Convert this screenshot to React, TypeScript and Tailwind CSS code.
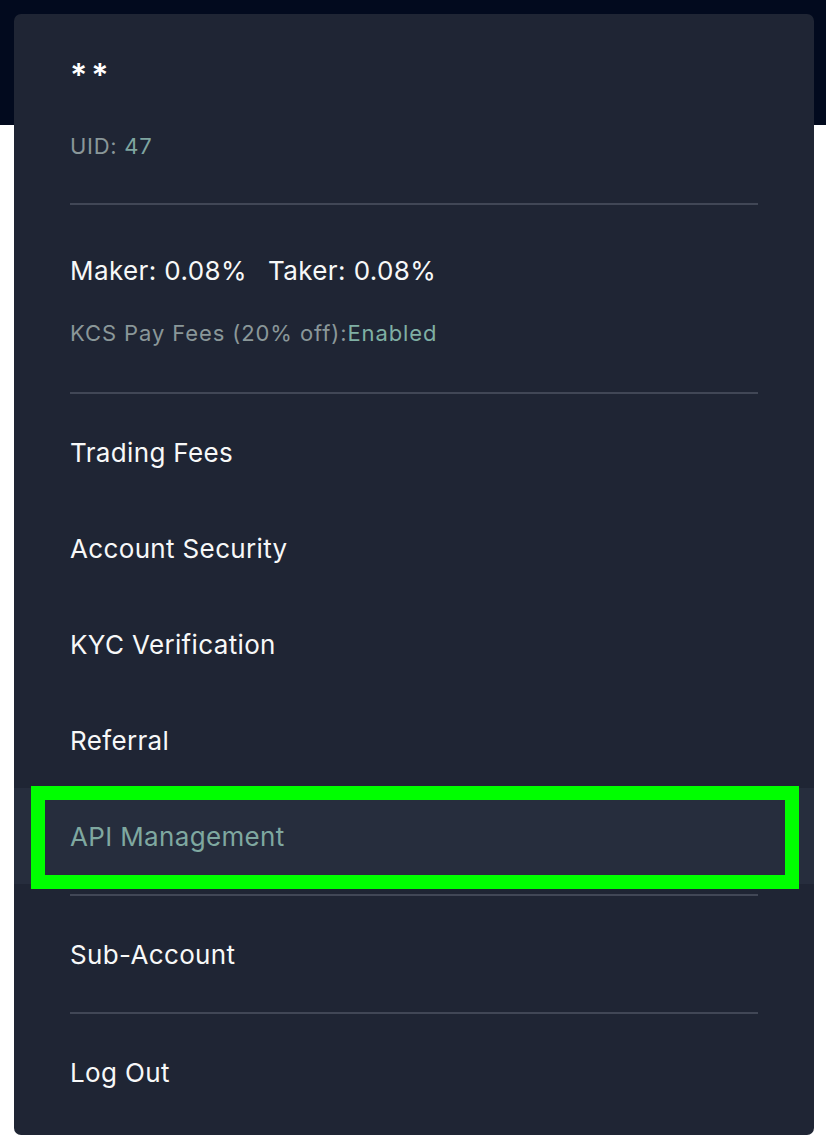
import React from "react";

const font = { fontFamily: "Inter, 'Noto Sans', sans-serif" };

function Divider() {
  return <div className="h-[2px] bg-[#414756]" />;
}

function Row({ label, active }: { label: string; active?: boolean }) {
  if (active) {
    return (
      <div className="relative -mx-[56px] h-[96px] bg-[#262D3D] px-[56px] flex items-center">
        <span className="text-[26px] text-[#7FA8A0] tracking-[0.35px]">{label}</span>
        <div className="absolute left-[17px] right-[15px] top-[-2px] bottom-[-5px] border-[14px] border-[#00FF00]" />
      </div>
    );
  }
  return (
    <div className="h-[96px] flex items-center">
      <span className="text-[26px] text-[#F7F8F8] tracking-[0.35px]">{label}</span>
    </div>
  );
}

export default function App() {
  return (
    <div className="w-[826px] h-[1148px] bg-white relative overflow-hidden" style={font}>
      <div className="absolute inset-x-0 top-0 h-[125px] bg-[#020A1E]" />
      <div className="relative pt-[14px] px-[14px]">
        <div className="w-[800px] rounded-[7px] bg-[#1F2534] px-[56px] pt-[30px] pb-[15px]">
          <div className="h-[56px] flex items-center pt-[8px] text-[32px] font-semibold text-white tracking-[4px]">**</div>
          <div className="mt-[26px] h-[40px] flex items-center text-[22px] text-[#8A9799] tracking-[0.7px]">
            UID: <span className="ml-[7px] text-[#7FA5A0]">47</span>
          </div>
          <div className="mt-[37px]">
            <Divider />
          </div>
          <div className="mt-[45px] h-[40px] flex items-center text-[26px] text-[#F7F8F8] tracking-[0.4px]">
            <span>Maker: 0.08%</span>
            <span className="ml-[21px]">Taker: 0.08%</span>
          </div>
          <div className="mt-[25px] h-[36px] flex items-center text-[22px] text-[#8A9799] tracking-[0.9px]">
            <span>KCS Pay Fees (20% off):</span>
            <span className="text-[#7FB0A4]">Enabled</span>
          </div>
          <div className="mt-[41px]">
            <Divider />
          </div>
          <div className="mt-[10px] flex flex-col">
            <Row label="Trading Fees" />
            <Row label="Account Security" />
            <Row label="KYC Verification" />
            <Row label="Referral" />
            <Row label="API Management" active />
          </div>
          <div className="mt-[10px]">
            <Divider />
          </div>
          <div className="mt-[10px]">
            <Row label="Sub-Account" />
          </div>
          <div className="mt-[10px]">
            <Divider />
          </div>
          <div className="mt-[10px]">
            <Row label="Log Out" />
          </div>
        </div>
      </div>
    </div>
  );
}
